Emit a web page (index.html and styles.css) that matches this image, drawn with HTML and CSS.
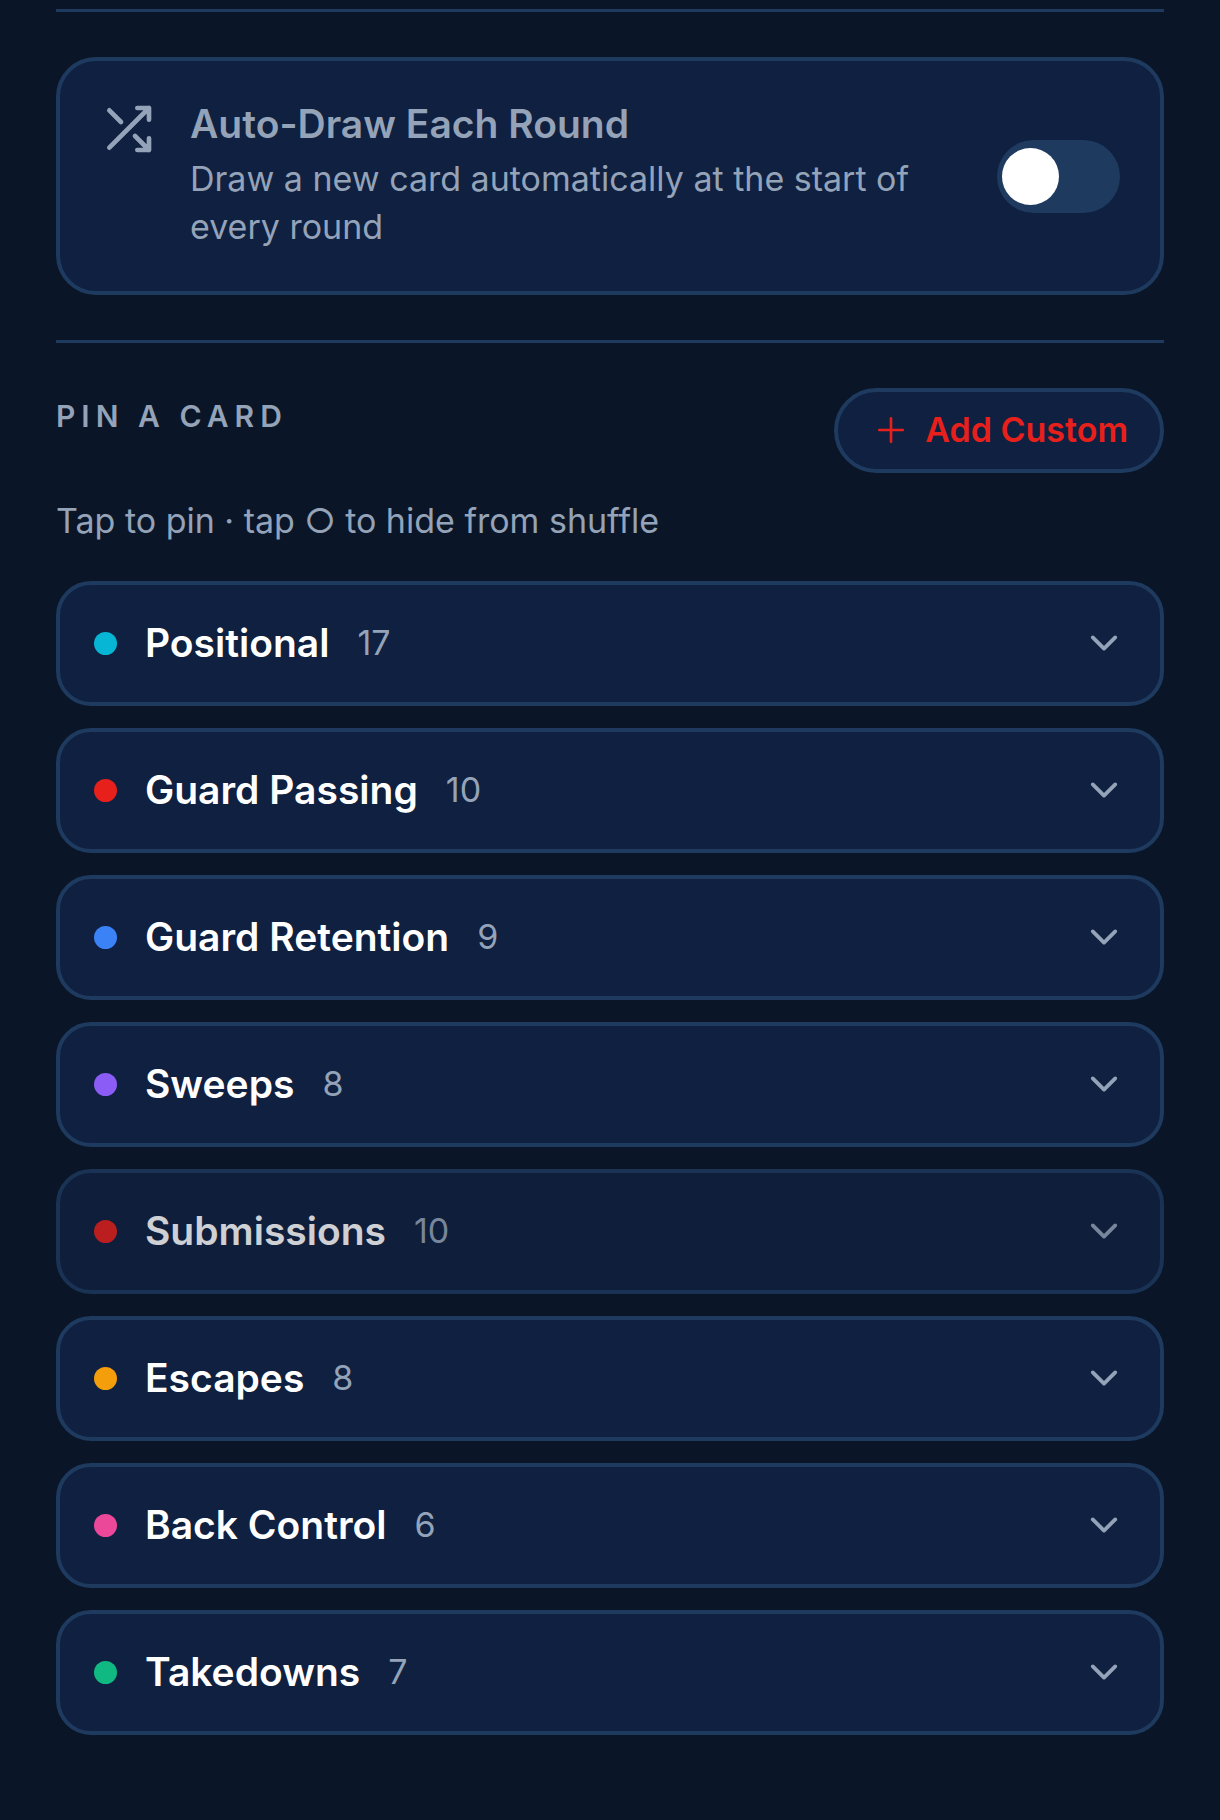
FILE: index.html
```html
<!DOCTYPE html>
<html lang="en">

<head>
    <meta charset="UTF-8">
    <meta name="viewport" content="width=device-width, initial-scale=1.0">
    <title>Cards</title>
    <link rel="stylesheet" href="styles.css">
</head>

<body>

    <!-- shared icon shapes -->
    <svg class="sprite" aria-hidden="true">
        <symbol id="chevron" viewBox="0 0 512 512">
            <path d="M112 184l144 144 144-144" fill="none" stroke="currentColor" stroke-width="48" stroke-linecap="round" stroke-linejoin="round" />
        </symbol>
    </svg>

    <main class="container">
        <hr class="divider">

        <section class="auto-draw">
            <svg class="shuffle-icon" viewBox="0 0 24 24" aria-hidden="true">
                <path d="M16 3h5v5M4 20L21 3M21 16v5h-5M15 15l6 6M4 4l5 5" />
            </svg>
            <label class="auto-text" for="autoDraw">
                <span class="auto-title">Auto-Draw Each Round</span>
                <span class="auto-desc">Draw a new card automatically at the start of every round</span>
            </label>
            <input type="checkbox" role="switch" class="toggle" id="autoDraw">
        </section>

        <hr class="divider">

        <section>
            <div class="pin-header">
                <h2>PIN A CARD</h2>
                <button type="button" class="add-btn">
                    <svg class="add-icon" viewBox="0 0 512 512" aria-hidden="true">
                        <path d="M256 112v288M400 256H112" />
                    </svg>
                    Add Custom
                </button>
            </div>
            <p class="hint">Tap to pin · tap ○ to hide from shuffle</p>

            <div class="categories">
                <button type="button" class="category" aria-expanded="false">
                    <span class="dot positional"></span>
                    <span class="name">Positional</span>
                    <span class="count">17</span>
                    <svg class="chevron" aria-hidden="true"><use href="#chevron" /></svg>
                </button>
                <button type="button" class="category" aria-expanded="false">
                    <span class="dot passing"></span>
                    <span class="name">Guard Passing</span>
                    <span class="count">10</span>
                    <svg class="chevron" aria-hidden="true"><use href="#chevron" /></svg>
                </button>
                <button type="button" class="category" aria-expanded="false">
                    <span class="dot retention"></span>
                    <span class="name">Guard Retention</span>
                    <span class="count">9</span>
                    <svg class="chevron" aria-hidden="true"><use href="#chevron" /></svg>
                </button>
                <button type="button" class="category" aria-expanded="false">
                    <span class="dot sweeps"></span>
                    <span class="name">Sweeps</span>
                    <span class="count">8</span>
                    <svg class="chevron" aria-hidden="true"><use href="#chevron" /></svg>
                </button>
                <button type="button" class="category pressed" aria-expanded="false">
                    <span class="dot submissions"></span>
                    <span class="name">Submissions</span>
                    <span class="count">10</span>
                    <svg class="chevron" aria-hidden="true"><use href="#chevron" /></svg>
                </button>
                <button type="button" class="category" aria-expanded="false">
                    <span class="dot escapes"></span>
                    <span class="name">Escapes</span>
                    <span class="count">8</span>
                    <svg class="chevron" aria-hidden="true"><use href="#chevron" /></svg>
                </button>
                <button type="button" class="category" aria-expanded="false">
                    <span class="dot back"></span>
                    <span class="name">Back Control</span>
                    <span class="count">6</span>
                    <svg class="chevron" aria-hidden="true"><use href="#chevron" /></svg>
                </button>
                <button type="button" class="category" aria-expanded="false">
                    <span class="dot takedowns"></span>
                    <span class="name">Takedowns</span>
                    <span class="count">7</span>
                    <svg class="chevron" aria-hidden="true"><use href="#chevron" /></svg>
                </button>
            </div>
        </section>
    </main>

</body>

</html>
```

FILE: styles.css
```css
* {
    margin: 0;
    padding: 0;
    box-sizing: border-box;
}

body {
    font-family: 'Inter', sans-serif;
    font-size: 34px;
    line-height: 48px;
    min-height: 100vh;
    background-color: #0a1628;
    color: #94a3b8;
}

button {
    font-family: inherit;
    cursor: pointer;
}

.sprite {
    display: none;
}

.container {
    padding: 9px 56px 80px;
}

.divider {
    border: none;
    height: 3px;
    background-color: #1e3a5f;
}

/* Auto-draw card */
.auto-draw {
    display: flex;
    align-items: center;
    margin: 45px 0;
    padding: 40px;
    background-color: #0f2040;
    border: 4px solid #1e3a5f;
    border-radius: 40px;
}

.shuffle-icon {
    flex: none;
    align-self: flex-start;
    width: 56px;
    height: 56px;
    margin-right: 34px;
    fill: none;
    stroke: currentColor;
    stroke-width: 2;
    stroke-linecap: round;
    stroke-linejoin: round;
}

.auto-text {
    flex: 1;
    margin-right: 56px;
}

.auto-title {
    display: block;
    font-size: 39px;
    font-weight: 600;
    line-height: 46px;
    margin-bottom: 8px;
}

.auto-desc {
    display: block;
}

.toggle {
    appearance: none;
    flex: none;
    display: flex;
    align-items: center;
    width: 123px;
    height: 73px;
    padding: 0 5px;
    border-radius: 37px;
    background-color: #1e3a5f;
    cursor: pointer;
}

.toggle::before {
    content: "";
    width: 57px;
    height: 57px;
    border-radius: 50%;
    background-color: #fff;
}

.toggle:checked {
    justify-content: flex-end;
    background-color: #e8201c;
}

/* Pin a card */
.pin-header {
    display: flex;
    align-items: center;
    justify-content: space-between;
    margin-top: 45px;
}

.pin-header h2 {
    font-size: 30px;
    font-weight: 600;
    line-height: 38px;
    letter-spacing: 6px;
    margin-bottom: 30px;
}

.add-btn {
    display: flex;
    align-items: center;
    gap: 13px;
    padding: 17px 32px 18px;
    font-size: 34px;
    font-weight: 600;
    line-height: 42px;
    color: #e8201c;
    background-color: #0f2040;
    border: 4px solid #1e3a5f;
    border-radius: 43px;
}

.add-icon {
    width: 42px;
    height: 42px;
    fill: none;
    stroke: currentColor;
    stroke-width: 32;
    stroke-linecap: round;
}

.hint {
    margin: 24px 0 36px;
}

.categories {
    display: flex;
    flex-direction: column;
    gap: 22px;
}

.category {
    display: flex;
    align-items: center;
    gap: 28px;
    padding: 34px 36px 35px 34px;
    font-size: 34px;
    line-height: 48px;
    color: #94a3b8;
    background-color: #0f2040;
    border: 4px solid #1e3a5f;
    border-radius: 35px;
}

.category.pressed {
    opacity: 0.8;
}

.name {
    font-size: 39px;
    font-weight: 600;
    color: #fff;
}

.chevron {
    width: 40px;
    height: 40px;
    margin-left: auto;
}

.dot {
    width: 23px;
    height: 23px;
    border-radius: 50%;
}

.positional {
    background-color: #06b6d4;
}

.passing,
.submissions {
    background-color: #e8201c;
}

.retention {
    background-color: #3b82f6;
}

.sweeps {
    background-color: #8b5cf6;
}

.escapes {
    background-color: #f59e0b;
}

.back {
    background-color: #ec4899;
}

.takedowns {
    background-color: #10b981;
}
```
